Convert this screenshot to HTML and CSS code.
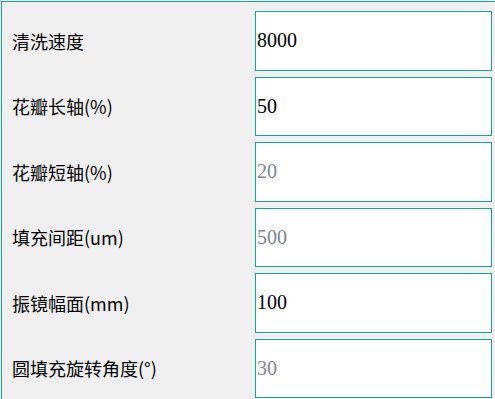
FILE: index.html
```html
<!DOCTYPE html>
<html lang="zh">
<head>
<meta charset="utf-8">
<link rel="stylesheet" href="styles.css">
</head>
<body>
<div class="panel">
  <div class="row"><span class="label">清洗速度</span><div class="field">8000</div></div>
  <div class="row"><span class="label">花瓣长轴(%)</span><div class="field">50</div></div>
  <div class="row"><span class="label">花瓣短轴(%)</span><div class="field muted">20</div></div>
  <div class="row"><span class="label">填充间距(um)</span><div class="field muted">500</div></div>
  <div class="row"><span class="label">振镜幅面(mm)</span><div class="field">100</div></div>
  <div class="row"><span class="label">圆填充旋转角度(°)</span><div class="field muted">30</div></div>
</div>
</body>
</html>
```
FILE: styles.css
```css
html, body {
  margin: 0;
  padding: 0;
  background: #f0f0f0;
  overflow: hidden;
}
body {
  width: 495px;
  height: 399px;
}
.panel {
  margin: 1px 0 0 1px;
  border-top: 1px solid #17a593;
  border-left: 1px solid #17a593;
  height: 398px;
  padding: 9px 3px 0 10px;
  display: flex;
  flex-direction: column;
  gap: 6px;
  box-sizing: border-box;
  overflow: hidden;
}
.row {
  display: flex;
  align-items: center;
  height: 59.5px;
  flex: none;
}
.label {
  flex: 1;
  font-family: "Noto Sans CJK SC", "Microsoft YaHei", sans-serif;
  font-size: 18px;
  color: #000;
}
.field {
  width: 237px;
  height: 59.5px;
  box-sizing: border-box;
  background: #fff;
  border: 1px solid #17a593;
  display: flex;
  align-items: center;
  padding-left: 1px;
  font-family: "Liberation Serif", "Times New Roman", serif;
  font-size: 20px;
  color: #000;
}
.muted {
  color: #7f8790;
}
```
